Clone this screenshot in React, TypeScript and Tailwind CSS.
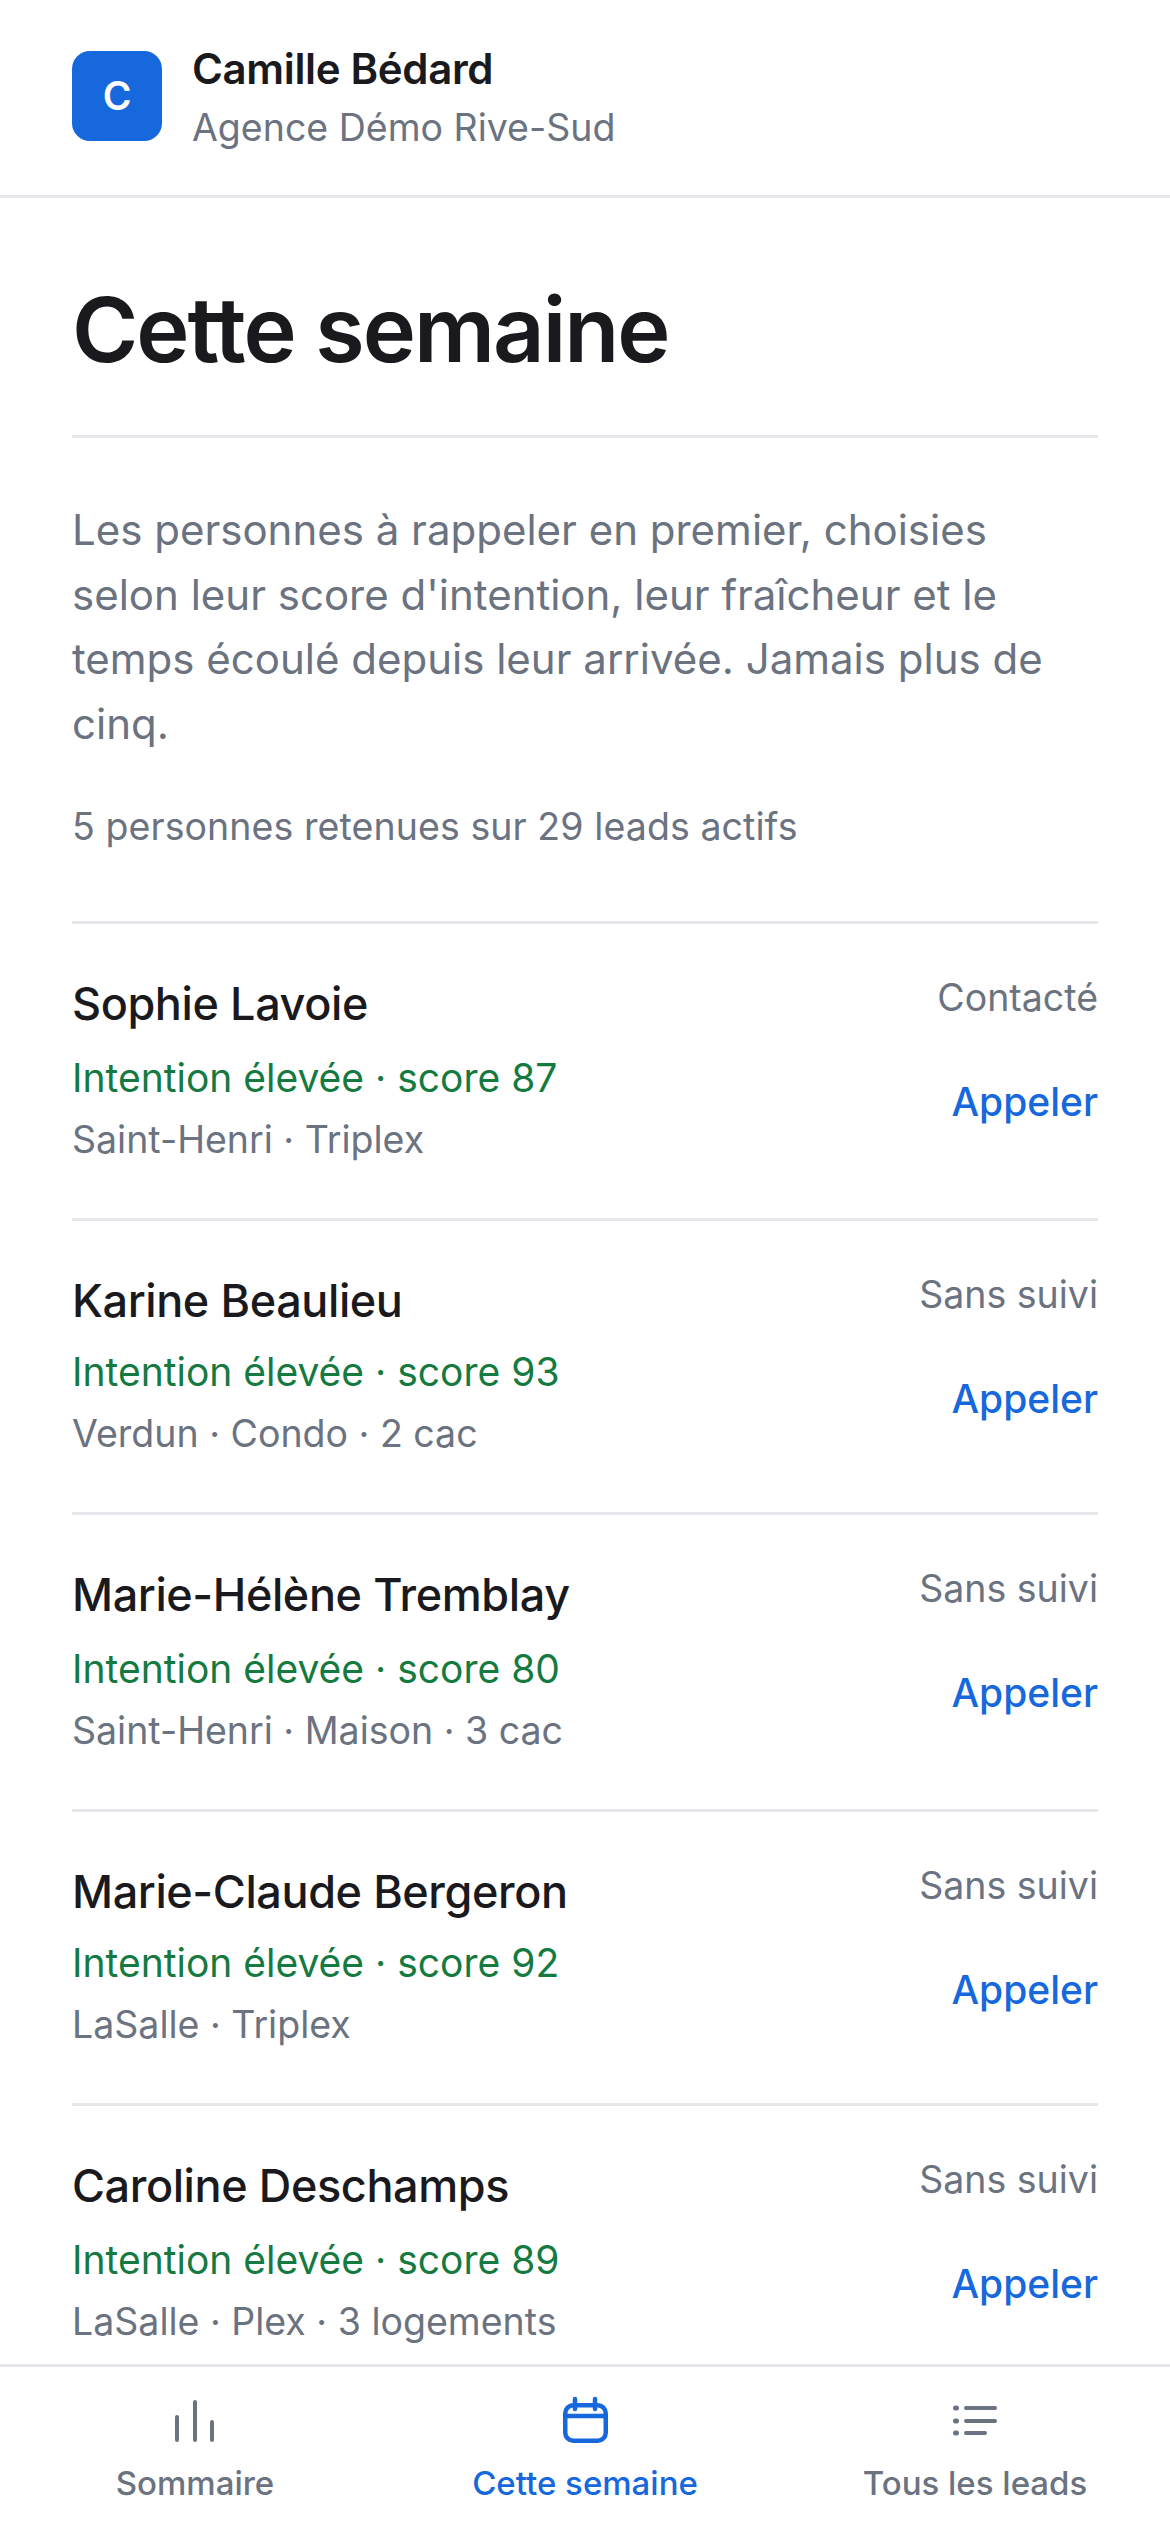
import React from "react";

const leads = [
  { name: "Sophie Lavoie", status: "Contacté", intent: "Intention élevée · score 87", info: "Saint-Henri · Triplex" },
  { name: "Karine Beaulieu", status: "Sans suivi", intent: "Intention élevée · score 93", info: "Verdun · Condo · 2 cac" },
  { name: "Marie-Hélène Tremblay", status: "Sans suivi", intent: "Intention élevée · score 80", info: "Saint-Henri · Maison · 3 cac" },
  { name: "Marie-Claude Bergeron", status: "Sans suivi", intent: "Intention élevée · score 92", info: "LaSalle · Triplex" },
  { name: "Caroline Deschamps", status: "Sans suivi", intent: "Intention élevée · score 89", info: "LaSalle · Plex · 3 logements" },
];

function LeadRow({ lead, tall }: { lead: (typeof leads)[number]; tall: boolean }) {
  return (
    <div className={`flex justify-between border-t-[3px] border-[#e5e7eb] pt-[48px] shrink-0 ${tall ? "h-[297px]" : "h-[294px]"}`}>
      <div className="flex flex-col">
        <div className="text-[45px] leading-[66px] -translate-y-px font-medium tracking-[-0.4px] text-[#1a1a1e]">{lead.name}</div>
        <div className={`text-[39px] leading-[60px] text-[#157a3f] ${tall ? "mt-[10px]" : "mt-[7px]"}`}>{lead.intent}</div>
        <div className="mt-[2px] text-[37.5px] leading-[60px] text-[#6b7280]">{lead.info}</div>
      </div>
      <div className="flex flex-col items-end">
        <div className="-mt-[2px] text-[37.5px] leading-[56px] text-[#6b7280]">{lead.status}</div>
        <div className="mt-[46px] text-[39px] leading-[60px] font-medium text-[#1668dc]">Appeler</div>
      </div>
    </div>
  );
}

function NavItem({ label, active, children }: { label: string; active?: boolean; children: React.ReactNode }) {
  return (
    <div className={`flex-1 flex flex-col items-center pt-[28px] ${active ? "text-[#1668dc]" : "text-[#6b7280]"}`}>
      <svg viewBox="0 0 60 60" fill="none" stroke="currentColor" strokeLinecap="round" strokeLinejoin="round" className="h-[60px] w-[60px]">
        {children}
      </svg>
      <div className="mt-[5px] text-[33px] leading-[46px] font-medium">{label}</div>
    </div>
  );
}

export default function App() {
  return (
    <div className="h-[2532px] flex flex-col bg-white overflow-hidden font-['Inter',sans-serif]">
      <header className="h-[198px] shrink-0 flex items-start gap-[30px] px-[72px] pt-[51px] border-b-[3px] border-[#e5e7eb]">
        <div className="h-[90px] w-[90px] rounded-[18px] bg-[#1668dc] flex items-center justify-center text-white text-[39px] font-semibold">C</div>
        <div className="-mt-[12px]">
          <div className="text-[42px] leading-[60px] font-semibold tracking-[-0.35px] text-[#1a1a1e]">Camille Bédard</div>
          <div className="mt-[1px] text-[37.5px] leading-[56px] text-[#6b7280]">Agence Démo Rive-Sud</div>
        </div>
      </header>
      <main className="flex-1 min-h-0 overflow-hidden px-[72px]">
        <h1 className="mt-[72px] text-[90px] leading-[120px] font-semibold tracking-[-2px] text-[#1a1a1e]">Cette semaine</h1>
        <div className="mt-[45px] border-t-[3px] border-[#e5e7eb]" />
        <p className="mt-[60px] text-[42px] leading-[64.5px] text-[#6b7280]">
          Les personnes à rappeler en premier, choisies selon leur score d'intention, leur fraîcheur et le temps écoulé depuis leur arrivée. Jamais plus de cinq.
        </p>
        <p className="mt-[43px] text-[37.5px] leading-[56px] tracking-[0.08px] text-[#6b7280]">5 personnes retenues sur 29 leads actifs</p>
        <div className="mt-[66px]">
          {leads.map((lead, i) => (
            <LeadRow key={lead.name} lead={lead} tall={i % 2 === 0} />
          ))}
        </div>
      </main>
      <nav className="h-[168px] shrink-0 flex border-t-[3px] border-[#e5e7eb]">
        <NavItem label="Sommaire">
          <path d="M12 22V45M30 7V45M47 27V45" strokeWidth="4" />
        </NavItem>
        <NavItem label="Cette semaine" active>
          <g strokeWidth="4.5">
            <rect x="10.25" y="10.25" width="40.5" height="35.5" rx="8" />
            <path d="M20 4V14M40 4V14M10.25 21H50.75" />
          </g>
        </NavItem>
        <NavItem label="Tous les leads">
          <path d="M21 13H50M21 26H50M21 38H40" strokeWidth="4" />
          <path d="M10.5 13H11.5M10.5 26H11.5M10.5 38H11.5" strokeWidth="5" />
        </NavItem>
      </nav>
    </div>
  );
}
